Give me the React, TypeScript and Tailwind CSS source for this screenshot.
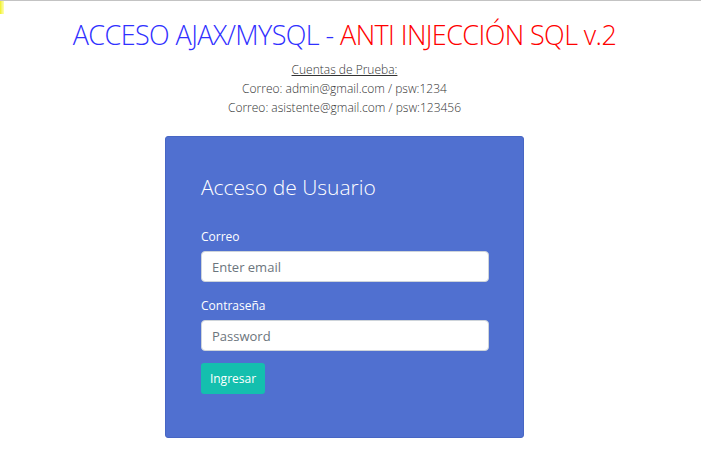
import React from 'react';

const font = { fontFamily: '"Open Sans", "Noto Sans", sans-serif' };

const App: React.FC = () => {
  return (
    <div className="relative min-h-[452px] w-[701px] bg-white border-t border-[#c3c3c3]" style={font}>
      {/* small yellow mark in the corner */}
      <div className="absolute left-0 top-0 h-[13px] w-[4px] bg-gradient-to-r from-[#f0f000] to-[#ffffb0]" />

      <div className="flex w-[689px] flex-col items-center">
        <h1 className="mt-[17px] text-[27px] font-light leading-[34px] tracking-[-0.6px]">
          <span className="text-[#3030ff]">ACCESO AJAX/MYSQL - </span>
          <span className="text-[#ff0000]">ANTI INJECCIÓN SQL v.2</span>
        </h1>

        <div className="mt-[8px] text-center text-[12px] font-light leading-[19px] text-[#333]">
          <p className="underline">Cuentas de Prueba:</p>
          <p>Correo: admin@gmail.com / psw:1234</p>
          <p>Correo: asistente@gmail.com / psw:123456</p>
        </div>

        <div className="mt-[19px] h-[302px] w-[359px] rounded-[3px] border border-[#4766c4] bg-[#5070d0] px-[35px] pt-[36px]">
          <h2 className="text-[21px] font-light leading-[28px] text-white">Acceso de Usuario</h2>

          <form className="mt-[27px]">
            <label className="block text-[12px] leading-[17px] text-white">Correo</label>
            <input
              type="email"
              placeholder="Enter email"
              className="mt-[6px] h-[31px] w-[288px] rounded-[4px] border border-[#ced4da] bg-white px-[10px] text-[13px] text-[#495057] placeholder:text-[#6c757d] outline-none"
            />

            <label className="mt-[15px] block text-[12px] leading-[17px] text-white">Contraseña</label>
            <input
              type="password"
              placeholder="Password"
              className="mt-[6px] h-[31px] w-[288px] rounded-[4px] border border-[#ced4da] bg-white px-[10px] text-[13px] text-[#495057] placeholder:text-[#6c757d] outline-none"
            />

            <button
              type="button"
              className="mt-[12px] block h-[31px] w-[64px] rounded-[3px] bg-[#14bfae] text-[12px] text-white"
            >
              Ingresar
            </button>
          </form>
        </div>
      </div>
    </div>
  );
};

export default App;
